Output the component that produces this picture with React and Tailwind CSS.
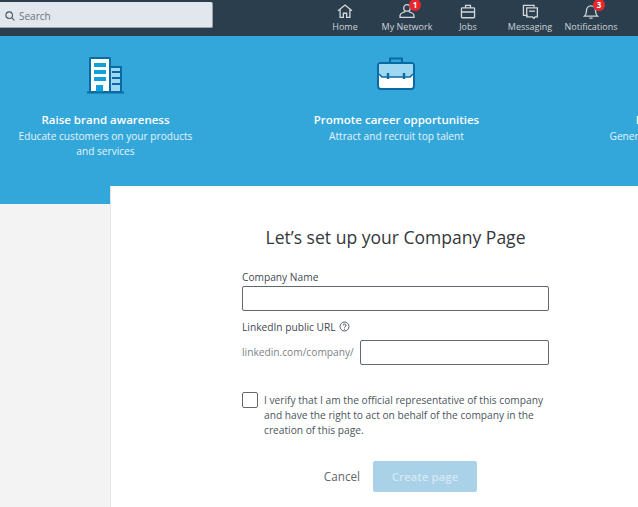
const NavItem = ({ label, badge, className, children }) => (
  <div className={`relative flex flex-col items-center ${className}`}>
    <svg width="18" height="16.4" viewBox="0 0 22 20" fill="none" stroke="#d3d8dc" strokeWidth="1.6" className="mt-[3px]">
      {children}
    </svg>
    <span className="mt-[2px] text-[9px] leading-[12px] text-[#cdd3d8] whitespace-nowrap">{label}</span>
    {badge && (
      <span className="absolute top-[-1px] left-[calc(50%+2px)] w-[12px] h-[12px] rounded-full bg-[#e8262d] text-white text-[8px] font-bold leading-[12px] text-center">
        {badge}
      </span>
    )}
  </div>
);

const Benefit = ({ title, lines, icon }) => (
  <div className="w-[211px] shrink-0 flex flex-col items-center text-center">
    <div className="h-[40px]">{icon}</div>
    <div className="mt-[15px] text-[11.5px] leading-[18px] font-semibold text-white whitespace-nowrap">{title}</div>
    {lines.map((l) => (
      <div key={l} className="text-[10.15px] leading-[15px] text-[#e6f4fb] whitespace-nowrap">{l}</div>
    ))}
  </div>
);

const BuildingIcon = () => (
  <svg width="38" height="38" viewBox="0 0 38 38">
    <rect x="22" y="11" width="12" height="25" fill="#9fd8f2" stroke="#0a6aa3" strokeWidth="2" />
    <path d="M25 16h9M25 22h9M25 28h9" stroke="#0a6aa3" strokeWidth="2" />
    <rect x="3" y="2" width="20" height="34" rx="1" fill="#fff" stroke="#0a6aa3" strokeWidth="2" />
    <rect x="7" y="7" width="12" height="4" fill="#12a0dc" />
    <rect x="7" y="14" width="12" height="4" fill="#12a0dc" />
    <rect x="7" y="21" width="12" height="4" fill="#12a0dc" />
    <rect x="9" y="29" width="7" height="7" fill="#12a0dc" />
    <path d="M0 36.500h37" stroke="#0a6aa3" strokeWidth="2" />
  </svg>
);

const CaseIcon = () => (
  <svg width="38" height="33" viewBox="0 0 38 33" className="mt-[1px] -ml-[1px]">
    <path d="M13 7V1.500h12V7" fill="none" stroke="#0a6aa3" strokeWidth="2" />
    <rect x="1" y="6" width="36" height="26" rx="3" fill="#fff" stroke="#0a6aa3" strokeWidth="2" />
    <path d="M2 8a1 1 0 0 1 1-1h32a1 1 0 0 1 1 1v9l-3 3H5l-3-3z" fill="#9fd8f2" />
    <path d="M2 17l3 3h28l3-3" fill="none" stroke="#0a6aa3" strokeWidth="1.6" />
    <path d="M11 16v6M27 16v6" stroke="#0a6aa3" strokeWidth="2.4" />
  </svg>
);

export default function App() {
  return (
    <div className="w-[638px] h-[507px] overflow-hidden bg-[#f3f3f3] font-['Open_Sans','Noto_Sans',sans-serif]">
      {/* Top nav */}
      <div className="h-[36px] bg-[#2b3e4d] flex items-start overflow-hidden">
        <div className="mt-[2px] w-[213px] h-[26px] bg-[#e1e7ed] rounded-r-[2px] border-r border-b border-[#9aa5ad] flex items-center pt-[3px] pl-[5px] gap-[4px]">
          <svg width="10" height="10" viewBox="0 0 11 11" fill="none" stroke="#4a5560" strokeWidth="1.2">
            <circle cx="4.600" cy="4.600" r="3.600" />
            <path d="M7.400 7.400L10.400 10.400" />
          </svg>
          <span className="text-[10px] text-[#6b747c]">Search</span>
        </div>
        <div className="ml-[120px] flex">
          <NavItem label="Home" className="w-[24px]">
            <path d="M2.500 9.500L11 2.500l8.500 7M5 8v9.500h4v-5h4v5h4V8" />
          </NavItem>
          <NavItem label="My Network" badge="1" className="ml-[25px] w-[50px]">
            <circle cx="11" cy="6" r="4" />
            <path d="M8.500 10.500C6 12 2.500 12.500 2.500 15v2.500h17V15c0-2.500-3.500-3-6-4.500" />
          </NavItem>
          <NavItem label="Jobs" className="ml-[26px] w-[20px]">
            <rect x="3" y="6" width="16" height="12" rx="1" />
            <path d="M8 6V3h6v3M3 11h16" />
          </NavItem>
          <NavItem label="Messaging" className="ml-[30px] w-[44px]">
            <path d="M8 15H3V3h13v2" />
            <path d="M7 6h13v11h-3l-1 2-2-2H7z" />
            <path d="M10 10h7" />
          </NavItem>
          <NavItem label="Notifications" badge="3" className="ml-[13px] w-[52px]">
            <path d="M3 16h16c-2-2-2.500-4-2.500-7a5.500 5.500 0 0 0-11 0c0 3-.5 5-2.500 7zM9 18.500h4" />
          </NavItem>
        </div>
      </div>

      {/* Blue band */}
      <div className="h-[168px] bg-[#33a7da] flex gap-[80px] pt-[20px] overflow-hidden">
        <Benefit title="Raise brand awareness" lines={["Educate customers on your products", "and services"]} icon={<BuildingIcon />} />
        <Benefit title="Promote career opportunities" lines={["Attract and recruit top talent"]} icon={<CaseIcon />} />
        <Benefit title="Expand your reach" lines={["Generate leads for your business"]} />
      </div>

      {/* Form card */}
      <div className="ml-[110px] -mt-[18px] relative h-[321px] bg-white border-l border-[#e3e3e3]">
        <div className="ml-[131px] w-[307px] pt-[38px]">
          <h1 className="text-[17.55px] leading-[26px] text-[#33383c] text-center whitespace-nowrap">Let’s set up your Company Page</h1>
          <label className="block mt-[20px] text-[10.2px] leading-[15px] text-[#3f4a52]">Company Name</label>
          <input className="block mt-[1px] w-[307px] h-[25px] border border-[#62686d] rounded-[2px] bg-white" />
          <div className="mt-[9px] flex items-center gap-[3px]">
            <span className="text-[10.2px] leading-[15px] text-[#3f4a52]">LinkedIn public URL</span>
            <svg width="11" height="11" viewBox="0 0 11 11" fill="none" stroke="#555d63" className="mb-[3px]">
              <circle cx="5.500" cy="5.500" r="4.500" />
              <path d="M4 4.500a1.500 1.500 0 1 1 2.200 1.300c-.5.3-.7.5-.7 1M5.500 7.700v1" />
            </svg>
          </div>
          <div className="mt-[5px] flex items-center gap-[6px]">
            <span className="text-[10.2px] text-[#7c8388] whitespace-nowrap">linkedin.com/company/</span>
            <input className="block flex-1 min-w-0 h-[25px] border border-[#62686d] rounded-[2px] bg-white" />
          </div>
          <div className="mt-[27px] flex gap-[6px]">
            <span className="shrink-0 w-[16px] h-[16px] border border-[#62686d] rounded-[2px] bg-white" />
            <p className="mt-[1px] text-[10.2px] leading-[15px] text-[#4c555b]">
              I verify that I am the official representative of this company and have the right to act on behalf of the company in the creation of this page.
            </p>
          </div>
          <div className="mt-[23px] flex items-center justify-end gap-[13px] pr-[72px]">
            <span className="text-[11.7px] text-[#5f676c]">Cancel</span>
            <button className="w-[104px] h-[31px] rounded-[2px] bg-[#a9d2e8] text-[11.5px] font-semibold text-[#d3e8f4]">Create page</button>
          </div>
        </div>
      </div>
    </div>
  );
}
